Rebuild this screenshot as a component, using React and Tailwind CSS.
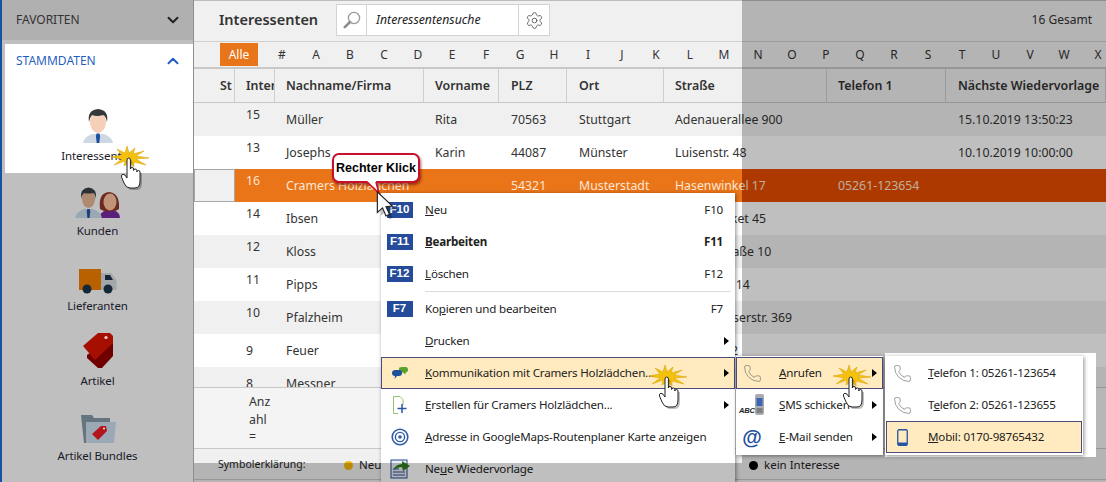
import { ChevronDown, ChevronUp, Phone, Settings } from "lucide-react";

const LETTERS = "#ABCDEFGHIJKLMNOPQRSTUVWXYZ".split("");
const COLS = "grid grid-cols-[41px_40px_149px_75px_68px_97px_163px_119px_160px]";

const ROWS = [
  { id: 15, name: "Müller", first: "Rita", plz: "70563", ort: "Stuttgart", street: "Adenauerallee 900", next: "15.10.2019 13:50:23", bg: "bg-[#f0f0f0]" },
  { id: 13, name: "Josephs", first: "Karin", plz: "44087", ort: "Münster", street: "Luisenstr. 48", next: "10.10.2019 10:00:00", bg: "bg-white" },
  { id: 16, name: "Cramers Holzlädchen", first: "", plz: "54321", ort: "Musterstadt", street: "Hasenwinkel 17", phone: "05261-123654", selected: true },
  { id: 14, name: "Ibsen", street: "Ackermarket 45", bg: "bg-white" },
  { id: 12, name: "Kloss", street: "Goethestraße 10", bg: "bg-[#f0f0f0]" },
  { id: 11, name: "Pipps", street: "Am Anger 14", bg: "bg-white" },
  { id: 10, name: "Pfalzheim", street: "Hauptwasserstr. 369", bg: "bg-[#f0f0f0]" },
  { id: 9, name: "Feuer", street: "Talstraße 2", bg: "bg-white" },
  { id: 8, name: "Messner", street: "", bg: "bg-[#f0f0f0]" },
];

function PersonIcon() {
  return (
    <svg width="32" height="36" viewBox="0 0 32 36">
      <path d="M1 35 Q2 29 10 26 L22 26 Q30 29 31 35 Z" fill="#cdd8e2" />
      <ellipse cx="16" cy="14" rx="8" ry="11" fill="#f6cfb8" />
      <path d="M7 14 Q5 2 16 1 Q27 2 25 14 Q24 8 21 7 Q15 9 10 7 Q8 9 7 14Z" fill="#33383a" />
      <path d="M14.6 25.5 h2.8 l.7 2.5 -.8 7 h-2.6 l-.8 -7z" fill="#1d4fa0" />
    </svg>
  );
}

function PeopleIcon() {
  return (
    <svg width="46" height="32" viewBox="0 0 46 32">
      <path d="M24 31 Q25 25 32 23 L38 23 Q45 25 45 31Z" fill="#5a1f7a" />
      <path d="M25 22 Q23 6 34 5 Q45 6 44 22 Q40 25 35 24 Q29 25 25 22Z" fill="#6d2a1f" />
      <ellipse cx="35" cy="15" rx="6.5" ry="8.5" fill="#c09478" />
      <path d="M0 31 Q1 25 9 22 L18 22 Q26 25 27 31Z" fill="#9aa8b2" />
      <ellipse cx="13.5" cy="12" rx="6.5" ry="9" fill="#b08a70" />
      <path d="M6 12 Q5 1 13.5 0.5 Q22 1 21 12 Q20 7 18 6 Q13 7 9 6 Q7 8 6 12Z" fill="#2d3032" />
      <path d="M12.3 22 h2.4 l.6 2 -.7 7 h-2.2 l-.7 -7z" fill="#1d3f80" />
    </svg>
  );
}

function TruckIcon() {
  return (
    <svg width="40" height="26" viewBox="0 0 40 26">
      <rect x="1" y="1" width="22" height="21" fill="#b96000" />
      <path d="M23 5 H33 L38.5 12 V22 H23Z" fill="#a3a7aa" />
      <path d="M27 7 H32 L35 12 H27Z" fill="#17233a" />
      <circle cx="9" cy="21" r="4.5" fill="#14283a" />
      <circle cx="30" cy="21" r="4.5" fill="#14283a" />
    </svg>
  );
}

function TagIcon() {
  return (
    <svg width="32" height="37" viewBox="0 0 32 37">
      <path d="M5 23 L5 26 L16 36 L20 36 L31 24 L31 9 L24 9Z" fill="#700000" />
      <path d="M1 14 L16 1 L28 1 L31 4 L31 11 L13 28Z" fill="#a60f00" />
      <circle cx="24" cy="5.5" r="1.6" fill="#e8d8d0" />
    </svg>
  );
}

function FolderTagIcon() {
  return (
    <svg width="36" height="30" viewBox="0 0 36 30">
      <path d="M1 1 H12 L14 4 H30 V8 H8 L6 29 H4Z" fill="#64757f" />
      <path d="M6 8 H36 L34 29 H6Z" fill="#9ba8b6" />
      <path d="M12 20 L21 12 L26 12 L27 17 L18 26Z" fill="#b3141c" />
      <circle cx="24" cy="14.5" r="1" fill="#f2e6e6" />
    </svg>
  );
}

function ChatIcon() {
  return (
    <svg width="16" height="13" viewBox="0 0 16 13">
      <path d="M7 1.5 Q7 0 10 0 H14 Q16 0 16 2.5 Q16 5.5 13.5 5.5 L13.5 7.5 L11 5.5 H9.5 Q7 5.5 7 1.5Z" fill="#5aa02c" />
      <path d="M0 6 Q0 3 3.5 3 H7.5 Q10 3 10 6 Q10 9 7 9 H5 L2.5 12 L3 9 Q0 9 0 6Z" fill="#1d4f9c" />
    </svg>
  );
}

function NewDocIcon() {
  return (
    <svg width="14" height="18" viewBox="0 0 14 18">
      <path d="M.5.5 H7 L10 3.5 V9 M.5.5 V17.5 H5" fill="none" stroke="#8cc56b" />
      <path d="M9 8 V17 M4.5 12.5 H13.5" stroke="#2855a0" strokeWidth="1.5" />
    </svg>
  );
}

function TargetIcon() {
  return (
    <svg width="18" height="18" viewBox="0 0 18 18" fill="none" stroke="#2f5ba8">
      <circle cx="9" cy="9" r="7.8" strokeWidth="1.6" />
      <circle cx="9" cy="9" r="4.6" strokeWidth="1.4" />
      <circle cx="9" cy="9" r="1.8" fill="#2f5ba8" stroke="none" />
    </svg>
  );
}

function ReminderIcon() {
  return (
    <svg width="20" height="20" viewBox="0 0 20 20">
      <rect x="1" y="1" width="16" height="18" fill="#e8edf5" stroke="#24488f" />
      <path d="M3 10 H9 M3 13 H15 M3 16 H15" stroke="#24488f" />
      <path d="M3 11 Q6 5 12 5 L12 2 L20 7 L13 12 L12 8 Q8 8 3 11Z" fill="#2f7d1a" />
    </svg>
  );
}

function SmsPhoneIcon() {
  return (
    <svg width="26" height="22" viewBox="0 0 26 22">
      <rect x="16" y="0" width="9" height="21" rx="2" fill="#a9abae" />
      <rect x="17.5" y="4" width="6" height="8" fill="#3d63b5" />
      <rect x="17.5" y="14" width="6" height="5" fill="#7d7f82" />
      <text x="0" y="19" fontSize="7.5" fontWeight="700" fontStyle="italic" fill="#222" fontFamily="Liberation Sans">ABC</text>
    </svg>
  );
}

function MobileIcon() {
  return (
    <svg width="11" height="17" viewBox="0 0 11 17">
      <rect x="0.75" y="0.75" width="9.5" height="15.5" rx="1.2" fill="none" stroke="#2855a0" strokeWidth="1.3" />
      <rect x="1" y="13.5" width="9" height="3" fill="#2855a0" />
    </svg>
  );
}

function MagnifierIcon() {
  return (
    <svg width="18" height="18" viewBox="0 0 18 18" fill="none">
      <circle cx="11" cy="7" r="5.6" stroke="#9a9a9a" strokeWidth="1.3" />
      <path d="M7 11 L1.8 16.2" stroke="#8d8d8d" strokeWidth="2.6" strokeLinecap="round" />
    </svg>
  );
}

function ArrowCursor({ className }) {
  return (
    <svg className={className} width="22" height="30" viewBox="0 0 18 26">
      <path d="M3 3 L3 21 L7.5 17 L10.5 24 L13.5 22.5 L10.5 16 L16 15.5Z" fill="#000" opacity="0.25" transform="translate(1.5 1.5)" />
      <path d="M1.5 1.5 L1.5 19.5 L6 15.5 L9 22.5 L12 21 L9 14.5 L14.5 14Z" fill="#fff" stroke="#222" />
    </svg>
  );
}

// klick-hand with the yellow burst behind the finger tip
function ClickHand({ className }) {
  return (
    <svg className={className} width="40" height="48" viewBox="0 0 40 48">
      <path
        d="M16 0 L18 7 L24 2 L22 8 L33 5 L25 10 L38 12 L25 13 L35 19 L23 16 L23 21 L19 16 L13 20 L14 15 L3 19 L11 13 L0 11 L11 9 L6 3 L14 7Z"
        fill="#f4c20d"
        stroke="#d69a06"
        strokeWidth="0.5"
      />
      <g transform="translate(9 11)">
        <path
          d="M7 19 L7 3 Q7 1 8.7 1 Q10.4 1 10.4 3 L10.4 12 Q10.4 10.5 12 10.5 Q13.6 10.5 13.6 12 L13.6 13.5 Q13.6 12 15.2 12 Q16.8 12 16.8 13.5 L16.8 15 Q16.8 13.5 18.4 13.5 Q20 13.5 20 15 L20 24 Q20 31 15 31 L10 31 Q6 31 4 26 L1.5 20 Q1 17.5 3 17.2 Q5 17.2 7 21Z"
          fill="#000"
          opacity="0.25"
          transform="translate(2 2)"
        />
        <path
          d="M7 19 L7 3 Q7 1 8.7 1 Q10.4 1 10.4 3 L10.4 12 Q10.4 10.5 12 10.5 Q13.6 10.5 13.6 12 L13.6 13.5 Q13.6 12 15.2 12 Q16.8 12 16.8 13.5 L16.8 15 Q16.8 13.5 18.4 13.5 Q20 13.5 20 15 L20 24 Q20 31 15 31 L10 31 Q6 31 4 26 L1.5 20 Q1 17.5 3 17.2 Q5 17.2 7 21Z"
          fill="#fff"
          stroke="#222"
          strokeWidth="1"
        />
      </g>
    </svg>
  );
}

function NavItem({ icon, label }) {
  return (
    <div className="flex h-[75px] flex-col items-center">
      <div className="flex h-[41px] items-end">{icon}</div>
      <div className="mt-[3px] text-[11.5px] leading-[18px] tracking-[-0.1px] text-[#1a1a2a]">{label}</div>
    </div>
  );
}

function Sidebar() {
  return (
    <aside className="h-full w-[194px] shrink-0 border-r border-r-[#8f8f8f] border-l-2 border-l-[#1553a8] bg-[#bfbfbf]">
      <div className="flex h-[40px] items-center justify-between bg-[#b0b0b0] pl-[14px] pr-[11px] text-[12px] text-[#333]">
        <span>FAVORITEN</span>
        <ChevronDown size={18} strokeWidth={2.6} className="text-[#222]" />
      </div>
      <div className="ml-[3px] mt-[4px] h-[129px] bg-white">
        <div className="flex h-[33px] items-center justify-between pl-[11px] pr-[11px] text-[12px] text-[#1f5fbf]">
          <span>STAMMDATEN</span>
          <ChevronUp size={18} strokeWidth={2.6} className="text-[#1f5fbf]" />
        </div>
        <div className="mt-[26px] -translate-x-[1px]">
          <NavItem icon={<PersonIcon />} label="Interessenten" />
        </div>
      </div>
      <nav className="mt-[5px]">
        <NavItem icon={<PeopleIcon />} label="Kunden" />
        <NavItem icon={<TruckIcon />} label="Lieferanten" />
        <NavItem icon={<TagIcon />} label="Artikel" />
        <NavItem icon={<FolderTagIcon />} label="Artikel Bundles" />
      </nav>
    </aside>
  );
}

function Toolbar() {
  return (
    <div className="flex h-[42px] shrink-0 items-center border-y border-t-[#bdbdbd] border-b-[#d0d0d0] pb-[2px] pl-[25px] pr-[14px]">
      <h1 className="w-[117px] text-[14.5px] font-semibold text-[#333]">Interessenten</h1>
      <div className="flex h-[32px] border border-[#d2d2d2] bg-white">
        <div className="flex w-[30px] items-center justify-center border-r border-[#d2d2d2]">
          <MagnifierIcon />
        </div>
        <div className="flex w-[151px] items-center pl-[9px] text-[12.3px] italic text-[#222]">Interessentensuche</div>
        <div className="flex w-[31px] items-center justify-center border-l border-[#d2d2d2]">
          <Settings size={19} strokeWidth={1.1} className="text-[#555]" />
        </div>
      </div>
      <span className="ml-auto text-[12px] text-[#333]">16 Gesamt</span>
    </div>
  );
}

function AlphaBar() {
  return (
    <div className="flex h-[25px] shrink-0 items-center overflow-hidden pl-[26px] text-[12px] text-[#333]">
      <span className="flex h-[23px] w-[38px] shrink-0 items-center justify-center bg-[#e8751a] text-[#fff]">Alle</span>
      <div className="ml-[7px] flex">
        {LETTERS.map((l) => (
          <span key={l} className="w-[34px] shrink-0 text-center">{l}</span>
        ))}
      </div>
    </div>
  );
}

function HeaderCell({ children, className = "" }) {
  return (
    <div className={`flex items-center overflow-hidden whitespace-nowrap border-r border-[#cfcfcf] pt-[2px] text-[12.4px] font-semibold text-[#333] ${className}`}>
      {children}
    </div>
  );
}

function TableHeader() {
  return (
    <div className={`${COLS} h-[36px] shrink-0 border-y border-t-2 border-t-[#c8c8c8] border-b-[#c8c8c8]`}>
      <HeaderCell className="pl-[26px]">St</HeaderCell>
      <HeaderCell className="pl-[11px]">Inter</HeaderCell>
      <HeaderCell className="pl-[11px]">Nachname/Firma</HeaderCell>
      <HeaderCell className="pl-[11px]">Vorname</HeaderCell>
      <HeaderCell className="pl-[12px]">PLZ</HeaderCell>
      <HeaderCell className="pl-[12px]">Ort</HeaderCell>
      <HeaderCell className="pl-[11px]">Straße</HeaderCell>
      <HeaderCell className="pl-[11px]">Telefon 1</HeaderCell>
      <HeaderCell className="pl-[12px]">Nächste Wiedervorlage</HeaderCell>
    </div>
  );
}

function TableRow({ row }) {
  const text = row.selected ? "text-[#fde6d4]" : "text-[#333]";
  const bg = row.selected ? "bg-[linear-gradient(90deg,#ea7519_548px,#e84d00_548px)]" : row.bg;
  const idPos = row.id > 9 ? "pb-[10px]" : "";
  return (
    <div className={`${COLS} h-[33px] shrink-0 items-center whitespace-nowrap text-[12.3px] ${bg} ${text}`}>
      <div className={`h-full ${row.selected ? "border border-[#a8a8a8] bg-[#f0f0f0]" : ""}`} />
      <div className={`pl-[11px] pt-[2px] ${idPos}`}>{row.id}</div>
      <div className="pl-[11px] pt-[2px]">{row.name}</div>
      <div className="pl-[11px] pt-[2px]">{row.first}</div>
      <div className="pl-[12px] pt-[2px]">{row.plz}</div>
      <div className="pl-[12px] pt-[2px]">{row.ort}</div>
      <div className="pl-[11px] pt-[2px]">{row.street}</div>
      <div className="pl-[11px] pt-[2px]">{row.phone}</div>
      <div className="pl-[12px] pt-[2px]">{row.next}</div>
    </div>
  );
}

function Legend() {
  return (
    <div className="flex h-[31px] shrink-0 items-center border-b border-[#c8c8c8] pl-[24px] pt-[2px] text-[#222]">
      <span className="w-[126px] text-[10.5px]">Symbolerklärung:</span>
      <span className="h-[9px] w-[9px] rounded-full bg-[#f5b90f]" />
      <span className="ml-[6px] w-[390px] text-[11.5px]">Neu</span>
      <span className="h-[9px] w-[9px] rounded-full bg-black" />
      <span className="ml-[6px] text-[11.5px]">kein Interesse</span>
    </div>
  );
}

function Main() {
  return (
    <main className="flex h-full min-w-0 flex-1 flex-col bg-[#f0f0f0]">
      <Toolbar />
      <AlphaBar />
      <TableHeader />
      <div className="h-[284px] shrink-0 overflow-hidden">
        {ROWS.map((r) => (
          <TableRow key={r.id} row={r} />
        ))}
      </div>
      <div className="h-[62px] shrink-0 border-y border-[#c8c8c8] bg-[#f4f4f4] pl-[55px] pt-[5px] text-[12.3px] leading-[17.5px] text-[#333]">
        <div className="w-[26px] break-all">Anzahl =</div>
      </div>
      <Legend />
    </main>
  );
}

function MenuRow({ icon, label, shortcut, arrow, active, bold, iconSlot = "w-[35px] mr-[8px]" }) {
  return (
    <div
      className={`flex h-[32px] items-center border text-[11.6px] tracking-[-0.2px] text-[#222] ${active ? "border-[#4b4b7d] bg-[#ffebbf]" : "border-transparent"} ${bold ? "font-bold" : ""}`}
    >
      <div className={`flex shrink-0 items-center justify-center ${iconSlot}`}>{icon}</div>
      <div className="flex-1 whitespace-nowrap">{label}</div>
      {shortcut ? <div>{shortcut}</div> : null}
      <div className="flex w-[11px] shrink-0 justify-end">
        {arrow ? <span className="mr-[5px] h-0 w-0 border-y-[4px] border-l-[5px] border-y-transparent border-l-black" /> : null}
      </div>
    </div>
  );
}

function FKey({ children }) {
  return (
    <span className="flex h-[16px] w-[26px] items-center justify-center bg-[#264b9a] font-['Liberation_Sans',sans-serif] text-[11.5px] font-bold tracking-normal text-white">
      {children}
    </span>
  );
}

function ContextMenu() {
  return (
    <div className="absolute left-[381px] top-[193px] z-20 h-[300px] w-[354px] bg-white pt-px shadow-[1px_1px_4px_rgba(0,0,0,0.45)]">
      <MenuRow icon={<FKey>F10</FKey>} label={<><u>N</u>eu</>} shortcut="F10" />
      <MenuRow icon={<FKey>F11</FKey>} label={<><u>B</u>earbeiten</>} shortcut="F11" bold />
      <MenuRow icon={<FKey>F12</FKey>} label={<><u>L</u>öschen</>} shortcut="F12" />
      <div className="flex h-[3px] items-center pl-[44px] pr-[4px]">
        <div className="h-px w-full bg-[#dcdcdc]" />
      </div>
      <MenuRow icon={<FKey>F7</FKey>} label={<>Ko<u>p</u>ieren und bearbeiten</>} shortcut="F7" />
      <MenuRow label={<><u>D</u>rucken</>} arrow />
      <MenuRow icon={<ChatIcon />} label={<><u>K</u>ommunikation mit Cramers Holzlädchen...</>} arrow active />
      <MenuRow icon={<NewDocIcon />} label={<><u>E</u>rstellen für Cramers Holzlädchen...</>} arrow />
      <MenuRow icon={<TargetIcon />} label={<><u>A</u>dresse in GoogleMaps-Routenplaner Karte anzeigen</>} />
      <MenuRow icon={<ReminderIcon />} label={<>Ne<u>u</u>e Wiedervorlage</>} />
    </div>
  );
}

function SubMenus() {
  const phone = <Phone size={19} strokeWidth={0.9} className="text-[#777]" />;
  const slot1 = "w-[30px] mr-[12px]";
  const slot2 = "w-[30px] mr-[11px]";
  return (
    <>
      <div className="absolute left-[885px] top-[353px] z-[15] h-[104px] w-[211px] bg-white" />
      <div className="absolute left-[736px] top-[356px] z-20 h-[99px] w-[147px] bg-white pt-px shadow-[1px_1px_4px_rgba(0,0,0,0.45)]">
        <MenuRow iconSlot={slot1} icon={phone} label={<><u>A</u>nrufen</>} arrow active />
        <MenuRow iconSlot={slot1} icon={<SmsPhoneIcon />} label={<><u>S</u>MS schicken</>} arrow />
        <MenuRow iconSlot={slot1} icon={<span className="font-['Liberation_Sans',sans-serif] text-[20px] font-bold leading-none text-[#1d4f9c]">@</span>} label={<><u>E</u>-Mail senden</>} arrow />
      </div>
      <div className="absolute left-[885px] top-[356px] z-20 h-[99px] w-[198px] bg-white pl-px pr-[1px] pt-px shadow-[1px_1px_4px_rgba(0,0,0,0.45)]">
        <MenuRow iconSlot={slot2} icon={phone} label={<><u>T</u>elefon 1: 05261-123654</>} />
        <MenuRow iconSlot={slot2} icon={phone} label={<>T<u>e</u>lefon 2: 05261-123655</>} />
        <MenuRow iconSlot={slot2} icon={<MobileIcon />} label={<><u>M</u>obil: 0170-98765432</>} active />
      </div>
    </>
  );
}

function RightClickBubble() {
  return (
    <div className="absolute left-[332px] top-[153px] z-30">
      <div className="flex h-[30px] w-[88px] items-center justify-center rounded-[7px] border-2 border-[#c8102e] bg-white font-['Liberation_Sans',sans-serif] text-[12.5px] font-bold text-black shadow-[1px_2px_3px_rgba(90,0,0,0.6)]">
        Rechter Klick
      </div>
      <svg className="absolute left-[34px] top-[27px]" width="16" height="14" viewBox="0 0 16 14">
        <path d="M1 1 L13 13 L10 1Z" fill="#fff" />
        <path d="M1 2 L13 13 L10 2" fill="none" stroke="#c8102e" strokeWidth="1.6" />
      </svg>
    </div>
  );
}

export default function App() {
  return (
    <div className="relative flex h-[482px] w-[1106px] overflow-hidden bg-white font-['Noto_Sans',sans-serif]">
      <Sidebar />
      <Main />
      {/* dimmed areas around the highlighted workflow */}
      <div className="absolute left-[742px] right-0 top-0 z-10 h-[463px] bg-black/25" />
      <ContextMenu />
      <SubMenus />
      <div className="absolute left-[194px] right-0 top-[463px] z-30 h-[19px] bg-black/25" />
      <RightClickBubble />
      <ArrowCursor className="absolute left-[375px] top-[190px] z-40" />
      <ClickHand className="absolute left-[111px] top-[146px] z-40" />
      <ClickHand className="absolute left-[649px] top-[365px] z-40" />
      <ClickHand className="absolute left-[833px] top-[365px] z-40" />
    </div>
  );
}
